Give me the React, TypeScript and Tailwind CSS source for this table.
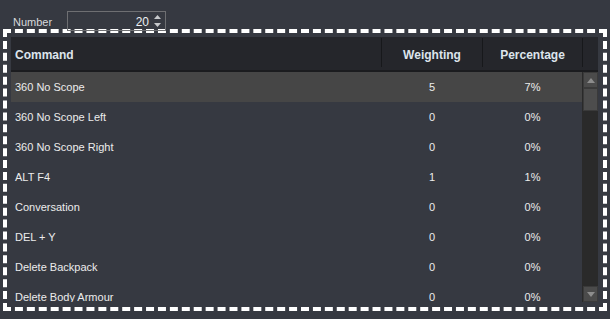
import { useState } from "react";

type Row = {
  command: string;
  weighting: number;
  percentage: number;
};

const rows: Row[] = [
  { command: "360 No Scope", weighting: 5, percentage: 7 },
  { command: "360 No Scope Left", weighting: 0, percentage: 0 },
  { command: "360 No Scope Right", weighting: 0, percentage: 0 },
  { command: "ALT F4", weighting: 1, percentage: 1 },
  { command: "Conversation", weighting: 0, percentage: 0 },
  { command: "DEL + Y", weighting: 0, percentage: 0 },
  { command: "Delete Backpack", weighting: 0, percentage: 0 },
  { command: "Delete Body Armour", weighting: 0, percentage: 0 },
];

const font = { fontFamily: '"Liberation Sans", Arial, sans-serif' };

function HeaderCell({ label, sep, align }: { label: string; sep?: boolean; align: "left" | "center" }) {
  return (
    <div className="flex h-full">
      {sep && <div className="w-px bg-[#17181b] mt-[1px] mb-[3px]" />}
      <div
        className={
          align === "left"
            ? "flex-1 flex items-center pl-[4px] pt-[2px] font-bold text-[12px] text-[#dde4ec]"
            : "flex-1 flex items-center justify-center pt-[2px] font-bold text-[12px] text-[#dde4ec]"
        }
      >
        {label}
      </div>
    </div>
  );
}

function Arrow({ up }: { up?: boolean }) {
  return (
    <svg width="8" height="5" viewBox="0 0 8 5">
      <path d={up ? "M0 5 L4 0 L8 5 Z" : "M0 0 L4 5 L8 0 Z"} fill="#8d8d8d" />
    </svg>
  );
}

export default function App() {
  const [selected, setSelected] = useState(0);
  const [count, setCount] = useState(20);

  return (
    <div className="w-[610px] h-[319px] bg-[#363941] overflow-hidden" style={font}>
      {/* spinner row */}
      <div className="flex items-start pt-[11px] h-[29px]">
        <span className="ml-[13px] mt-[3px] text-[11px] text-[#d6d8dc] w-[41px]">Number</span>
        <div className="ml-[13px] w-[99px] h-[20px] border border-[#6e6f72] flex items-center justify-end">
          <span className="text-[12px] text-[#eceff3] mr-[5px] mt-px">{count}</span>
          <div className="flex flex-col items-center gap-[4px] mr-[4px]">
            <button type="button" onClick={() => setCount(count + 1)} className="flex">
              <svg width="7" height="4" viewBox="0 0 7 4">
                <path d="M0 4 L3.5 0 L7 4 Z" fill="#c7c9cc" />
              </svg>
            </button>
            <button type="button" onClick={() => setCount(Math.max(0, count - 1))} className="flex">
              <svg width="7" height="4" viewBox="0 0 7 4">
                <path d="M0 0 L3.5 4 L7 0 Z" fill="#c7c9cc" />
              </svg>
            </button>
          </div>
        </div>
      </div>

      {/* focused table frame */}
      <div className="ml-[3px] w-[604px] h-[282px] border-4 border-dashed border-white pt-[4px] pl-[4px]">
        <div className="w-[587px] h-[265px] flex flex-col">
          <div className="h-[35px] bg-[#25262b] grid grid-cols-[370px_101px_100px_16px] border-b-2 border-[#1b1c1f]">
            <HeaderCell label="Command" align="left" />
            <HeaderCell label="Weighting" sep align="center" />
            <HeaderCell label="Percentage" sep align="center" />
            <HeaderCell label="" sep align="center" />
          </div>

          <div className="flex flex-1 min-h-0">
            <div className="w-[571px] overflow-hidden">
              {rows.map((r, i) => (
                <div
                  key={r.command}
                  onClick={() => setSelected(i)}
                  className={
                    i === selected
                      ? "h-[30px] grid grid-cols-[370px_101px_100px] items-center pt-px bg-[#464646] text-[11px] text-[#ececec]"
                      : "h-[30px] grid grid-cols-[370px_101px_100px] items-center pt-px text-[11px] text-[#ececec]"
                  }
                >
                  <span className="pl-[4px]">{r.command}</span>
                  <span className="text-center pl-px">{r.weighting}</span>
                  <span className="text-center pl-px">{r.percentage}%</span>
                </div>
              ))}
            </div>

            {/* scrollbar */}
            <div className="w-[16px] bg-[#2a2a2a] flex flex-col pl-px">
              <div className="h-[16px] bg-[#4b4b4b] border border-[#3a3a3a] flex items-center justify-center">
                <Arrow up />
              </div>
              <div className="h-[23px] bg-[#4d4d4d] border border-[#3a3a3a]" />
              <div className="flex-1" />
              <div className="h-[16px] bg-[#4b4b4b] border border-[#3a3a3a] flex items-center justify-center">
                <Arrow />
              </div>
            </div>
          </div>
        </div>
      </div>
    </div>
  );
}
